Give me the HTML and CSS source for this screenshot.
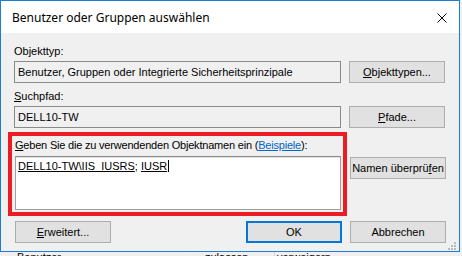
FILE: index.html
```html
<!DOCTYPE html>
<html lang="de">
<head>
<meta charset="utf-8">
<title>Benutzer oder Gruppen auswählen</title>
<link rel="stylesheet" href="styles.css">
</head>
<body>
<div class="window">
  <div class="titlebar">
    <span class="title">Benutzer oder Gruppen auswählen</span>
    <svg class="close" width="10" height="10" viewBox="0 0 10 10"><path d="M0.5 0.5L9.5 9.5M9.5 0.5L0.5 9.5" stroke="#000" stroke-width="1" fill="none"/></svg>
  </div>
  <div class="content">
    <div class="label first">Objekttyp:</div>
    <div class="row">
      <div class="field">Benutzer, Gruppen oder Integrierte Sicherheitsprinzipale</div>
      <div class="btn"><u>O</u>bjekttypen...</div>
    </div>
    <div class="label second"><u>S</u>uchpfad:</div>
    <div class="row">
      <div class="field">DELL10-TW</div>
      <div class="btn"><u>P</u>fade...</div>
    </div>
    <div class="mid">
      <div class="frame">
        <div class="label inframe"><u>G</u>eben Sie die zu verwendenden Objektnamen ein (<span class="link">Beispiele</span>):</div>
        <div class="textarea"><span class="resolved">DELL10-TW\IIS_IUSRS</span>; <span class="resolved">IUSR</span><span class="caret"></span></div>
      </div>
      <div class="btn check">Namen überprü<u>f</u>en</div>
    </div>
    <div class="bottom">
      <div class="btn adv"><u>E</u>rweitert...</div>
      <div class="spacer"></div>
      <div class="btn default">OK</div>
      <div class="btn">Abbrechen</div>
    </div>
  </div>
  <svg class="grip" width="8" height="8" viewBox="0 0 8 8">
    <rect x="6" y="0" width="2" height="2" fill="#b8b8b8"/>
    <rect x="3" y="3" width="2" height="2" fill="#b8b8b8"/>
    <rect x="6" y="3" width="2" height="2" fill="#b8b8b8"/>
    <rect x="0" y="6" width="2" height="2" fill="#b8b8b8"/>
    <rect x="3" y="6" width="2" height="2" fill="#b8b8b8"/>
    <rect x="6" y="6" width="2" height="2" fill="#b8b8b8"/>
  </svg>
</div>
<div class="behind">
  <div class="behind-row">
    <span class="b1">Benutzer</span>
    <span class="b2">zulassen</span>
    <span class="b3">verweigern</span>
  </div>
</div>
</body>
</html>
```
FILE: styles.css
```css
html, body {
  margin: 0;
  padding: 0;
}
body {
  width: 462px;
  height: 256px;
  overflow: hidden;
  background: #f0f0f0;
  font-family: "Liberation Sans", Arial, sans-serif;
  font-size: 11px;
  color: #000;
}
.window {
  position: relative;
  box-sizing: border-box;
  width: 460px;
  height: 252px;
  border: 1px solid #1a7fd4;
  background: #f0f0f0;
  display: flex;
  flex-direction: column;
}
.titlebar {
  height: 32px;
  background: #fff;
  display: flex;
  align-items: center;
  padding-left: 11px;
  padding-right: 12px;
  flex: none;
}
.title {
  flex: 1;
  font-family: "Noto Sans", "Open Sans", sans-serif;
  font-size: 12px;
  line-height: 16px;
  margin-top: 1px;
}
.close {
  display: block;
  margin-top: 1px;
}
.content {
  padding: 0 13px 0 13px;
  display: flex;
  flex-direction: column;
}
.label {
  line-height: 15px;
  height: 15px;
  white-space: nowrap;
}
.label.first {
  margin-top: 11px;
  margin-bottom: 2px;
}
.label.second {
  margin-top: 6px;
  margin-bottom: 2px;
}
.row {
  display: flex;
  gap: 8px;
  height: 22px;
}
.field {
  box-sizing: border-box;
  width: 327px;
  height: 22px;
  border: 1px solid #8a8a8a;
  background: #f0f0f0;
  padding: 0 3px;
  line-height: 20px;
  white-space: nowrap;
  overflow: hidden;
}
.btn {
  box-sizing: border-box;
  width: 96px;
  height: 22px;
  border: 1px solid #adadad;
  background: #e1e1e1;
  text-align: center;
  line-height: 20px;
  white-space: nowrap;
}
.mid {
  display: flex;
  margin-top: 4px;
  margin-left: -6px;
  gap: 3px;
}
.frame {
  box-sizing: border-box;
  width: 339px;
  height: 84px;
  border: 4px solid #ec1c24;
  padding: 2px 2px 2px 3px;
  display: flex;
  flex-direction: column;
}
.label.inframe {
  margin-bottom: 3px;
  letter-spacing: -0.2px;
}
.link {
  color: #0066cc;
  text-decoration: underline;
}
.textarea {
  box-sizing: border-box;
  width: 326px;
  height: 54px;
  background: #fff;
  border: 1px solid #a0a0a0;
  border-top-color: #8a8a8a;
  box-shadow: inset 0 1px 0 #e3e3e3;
  padding: 2px 2px 0 2px;
  line-height: 15px;
  white-space: nowrap;
}
.resolved {
  text-decoration: underline;
}
.caret {
  display: inline-block;
  width: 1px;
  height: 12px;
  background: #000;
  vertical-align: -2px;
  margin-left: 1px;
}
.btn.check {
  margin-top: 25px;
}
.bottom {
  display: flex;
  margin-top: 5px;
  gap: 8px;
}
.btn.adv {
  margin-left: 1px;
}
.spacer {
  flex: 1;
}
.btn.default {
  border: 2px solid #0078d7;
  line-height: 18px;
}
.grip {
  position: absolute;
  right: 3px;
  bottom: 1px;
}
.behind {
  height: 4px;
  overflow: hidden;
  position: relative;
}
.behind-row {
  display: flex;
  margin-top: -2px;
  line-height: 15px;
  color: #000;
}
.b1 {
  margin-left: 17px;
  width: 188px;
}
.b2 {
  width: 69px;
}
.b3 {
  border-left: 1px solid #d0d0d0;
  padding-left: 2px;
}
```
